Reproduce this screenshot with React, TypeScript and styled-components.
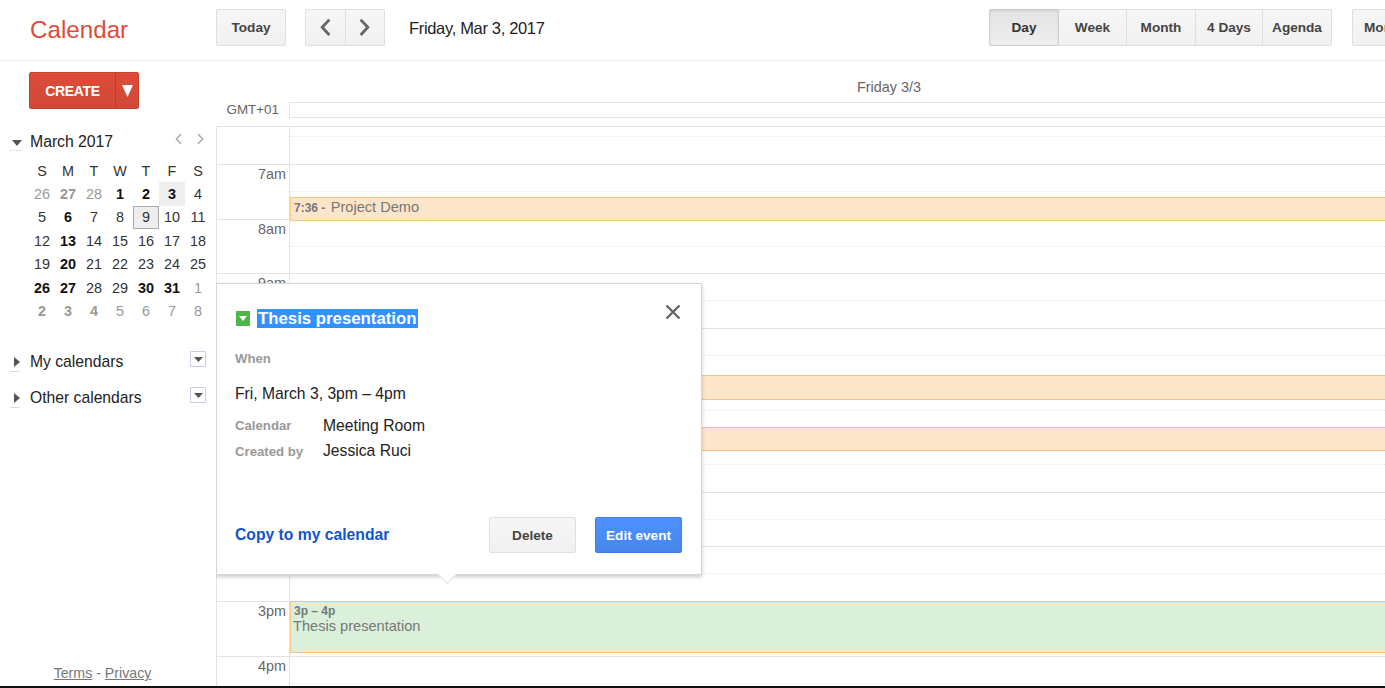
import styled, { createGlobalStyle } from 'styled-components';

const GlobalStyle = createGlobalStyle`
  html, body {
    margin: 0;
    height: 100%;
    background: #fff;
    overflow: hidden;
    font-family: 'Liberation Sans', Arial, sans-serif;
  }
  * { box-sizing: border-box; }
`;

const WEEKDAYS = ['S', 'M', 'T', 'W', 'T', 'F', 'S'];

type Day = { n: number; bold?: boolean; muted?: boolean; today?: boolean; picked?: boolean };

const WEEKS: Day[][] = [
  [{ n: 26, muted: true }, { n: 27, muted: true, bold: true }, { n: 28, muted: true }, { n: 1, bold: true }, { n: 2, bold: true }, { n: 3, bold: true, today: true }, { n: 4 }],
  [{ n: 5 }, { n: 6, bold: true }, { n: 7 }, { n: 8 }, { n: 9, picked: true }, { n: 10 }, { n: 11 }],
  [{ n: 12 }, { n: 13, bold: true }, { n: 14 }, { n: 15 }, { n: 16 }, { n: 17 }, { n: 18 }],
  [{ n: 19 }, { n: 20, bold: true }, { n: 21 }, { n: 22 }, { n: 23 }, { n: 24 }, { n: 25 }],
  [{ n: 26, bold: true }, { n: 27, bold: true }, { n: 28 }, { n: 29 }, { n: 30, bold: true }, { n: 31, bold: true }, { n: 1, muted: true }],
  [{ n: 2, muted: true, bold: true }, { n: 3, muted: true, bold: true }, { n: 4, muted: true, bold: true }, { n: 5, muted: true }, { n: 6, muted: true }, { n: 7, muted: true }, { n: 8, muted: true }],
];

// labels from 10am to 2pm sit behind the event bubble
const HOURS = ['7am', '8am', '9am', '', '', '', '', '', '3pm', '4pm'];

function Chevron({ left, size, color, weight }: { left?: boolean; size: number; color: string; weight: number }) {
  return (
    <svg width={size} height={size * 1.7} viewBox="0 0 10 17">
      <polyline
        points={left ? '8.5,1.5 2,8.5 8.5,15.5' : '1.5,1.5 8,8.5 1.5,15.5'}
        fill="none"
        stroke={color}
        strokeWidth={weight}
      />
    </svg>
  );
}

function ExpandDown() {
  return (
    <svg width="16" height="14" viewBox="0 0 16 14">
      <polygon points="3,2 13,2 8,8" fill="#555" />
      <line x1="1" y1="12.5" x2="14" y2="12.5" stroke="#ddd" strokeDasharray="2 1" />
    </svg>
  );
}

function ExpandRight() {
  return (
    <svg width="16" height="18" viewBox="0 0 16 18">
      <polygon points="5,1 11,6 5,11" fill="#555" />
      <line x1="1" y1="15.5" x2="11" y2="15.5" stroke="#ddd" />
    </svg>
  );
}

function MenuArrow() {
  return (
    <svg width="9" height="5" viewBox="0 0 9 5">
      <polygon points="0,0 9,0 4.5,5" fill="#555" />
    </svg>
  );
}

function App() {
  return (
    <>
      <GlobalStyle />
      <Page>
        <TopBar>
          <Logo>Calendar</Logo>
          <TodayButton>Today</TodayButton>
          <NavGroup>
            <NavButton><Chevron left size={11} color="#666" weight={2.6} /></NavButton>
            <NavButton><Chevron size={11} color="#666" weight={2.6} /></NavButton>
          </NavGroup>
          <DateLabel>Friday, Mar 3, 2017</DateLabel>
          <ViewGroup>
            <ViewButton $width={70} $active>Day</ViewButton>
            <ViewButton $width={68}>Week</ViewButton>
            <ViewButton $width={69}>Month</ViewButton>
            <ViewButton $width={67}>4 Days</ViewButton>
            <ViewButton $width={69}>Agenda</ViewButton>
          </ViewGroup>
          <MoreButton>More</MoreButton>
        </TopBar>
        <Body>
          <Sidebar>
            <CreateButton>
              <CreateLabel>CREATE</CreateLabel>
              <CreateArrow>
                <svg width="11" height="12" viewBox="0 0 11 12"><polygon points="0,0 11,0 5.5,12" fill="#fff" /></svg>
              </CreateArrow>
            </CreateButton>
            <MonthHeader>
              <Expander><ExpandDown /></Expander>
              <MonthTitle>March 2017</MonthTitle>
              <MonthNav>
                <Chevron left size={7} color="#aaa" weight={2.2} />
                <Chevron size={7} color="#aaa" weight={2.2} />
              </MonthNav>
            </MonthHeader>
            <MiniGrid>
              {WEEKDAYS.map((d, i) => (
                <MiniHead key={i}>{d}</MiniHead>
              ))}
              {WEEKS.flat().map((d, i) => (
                <MiniDay key={i} $bold={d.bold} $muted={d.muted} $today={d.today} $picked={d.picked}>
                  {d.n}
                </MiniDay>
              ))}
            </MiniGrid>
            <CalendarRow $first>
              <Expander><ExpandRight /></Expander>
              <CalendarName>My calendars</CalendarName>
              <MenuBox><MenuArrow /></MenuBox>
            </CalendarRow>
            <CalendarRow>
              <Expander><ExpandRight /></Expander>
              <CalendarName>Other calendars</CalendarName>
              <MenuBox><MenuArrow /></MenuBox>
            </CalendarRow>
            <SideFooter>
              <FooterLink>Terms</FooterLink> - <FooterLink>Privacy</FooterLink>
            </SideFooter>
          </Sidebar>
          <Main>
            <DayHeading>Friday 3/3</DayHeading>
            <AllDayRow>
              <Zone>GMT+01</Zone>
              <AllDayBox />
            </AllDayRow>
            <Grid>
              <HourRow $height={38}>
                <HourLabel />
                <HourSlot><HalfHour $height={10} /></HourSlot>
              </HourRow>
              {HOURS.map((h, i) => (
                <HourRow key={i} $height={54.65}>
                  <HourLabel>{h}</HourLabel>
                  <HourSlot><HalfHour $height={27} /></HourSlot>
                </HourRow>
              ))}

              <EventBlock $top={70} $height={24}>
                <EventTime>7:36 - </EventTime>
                <EventTitle>Project Demo</EventTitle>
              </EventBlock>
              <EventBlock $top={248} $height={25} />
              <EventBlock $top={300} $height={24} />
              <EventBlock $top={474} $height={52} $green>
                <EventTimeLine>3p – 4p</EventTimeLine>
                <EventTitleLine>Thesis presentation</EventTitleLine>
              </EventBlock>

              <Bubble>
                <BubbleTitleRow>
                  <ColorChip>
                    <svg width="8" height="5" viewBox="0 0 8 5"><polygon points="0,0 8,0 4,5" fill="#fff" /></svg>
                  </ColorChip>
                  <BubbleTitle>Thesis presentation</BubbleTitle>
                  <CloseIcon width="16" height="16" viewBox="0 0 16 16">
                    <path d="M1.5 1.5 L14.5 14.5 M14.5 1.5 L1.5 14.5" stroke="#666" strokeWidth="2.4" fill="none" />
                  </CloseIcon>
                </BubbleTitleRow>
                <WhenLabel>When</WhenLabel>
                <WhenValue>Fri, March 3, 3pm – 4pm</WhenValue>
                <DetailRow>
                  <DetailLabel>Calendar</DetailLabel>
                  <DetailValue>Meeting Room</DetailValue>
                </DetailRow>
                <DetailRow>
                  <DetailLabel>Created by</DetailLabel>
                  <DetailValue>Jessica Ruci</DetailValue>
                </DetailRow>
                <BubbleFooter>
                  <CopyLink>Copy to my calendar</CopyLink>
                  <DeleteButton>Delete</DeleteButton>
                  <EditButton>Edit event</EditButton>
                </BubbleFooter>
                <BubbleTail />
              </Bubble>
            </Grid>
          </Main>
        </Body>
        <BottomEdge />
      </Page>
    </>
  );
}

const Page = styled.div`
  width: 1385px;
  height: 688px;
  display: flex;
  flex-direction: column;
  overflow: hidden;
`;

const TopBar = styled.header`
  flex: 0 0 61px;
  display: flex;
  align-items: flex-start;
  padding: 9px 0 0 30px;
  border-bottom: 1px solid #efefef;
  overflow: hidden;
`;

const Logo = styled.div`
  width: 186px;
  flex: none;
  color: #dd4b39;
  font-size: 24.2px;
  line-height: 41px;
`;

const buttonFace = `
  background: linear-gradient(#f6f6f6, #f1f1f1);
  border: 1px solid #dfdfdf;
  border-radius: 2px;
  color: #444;
  font-weight: 700;
  font-size: 13.6px;
`;

const TodayButton = styled.div`
  ${buttonFace}
  flex: none;
  width: 70px;
  height: 37px;
  margin-right: 19px;
  display: flex;
  align-items: center;
  justify-content: center;
`;

const NavGroup = styled.div`
  flex: none;
  display: flex;
  width: 80px;
  height: 37px;
  margin-right: 24px;
`;

const NavButton = styled.div`
  ${buttonFace}
  border-radius: 0;
  flex: 1;
  display: flex;
  align-items: center;
  justify-content: center;
  & + & { border-left: 0; }
  &:first-child { border-radius: 2px 0 0 2px; }
  &:last-child { border-radius: 0 2px 2px 0; }
`;

const DateLabel = styled.div`
  flex: none;
  width: 580px;
  color: #222;
  font-size: 16.5px;
  letter-spacing: -0.33px;
  line-height: 38px;
`;

const ViewGroup = styled.div`
  flex: none;
  display: flex;
  height: 37px;
  margin-right: 20px;
`;

const ViewButton = styled.div<{ $width: number; $active?: boolean }>`
  ${buttonFace}
  border-radius: 0;
  width: ${(p) => p.$width}px;
  display: flex;
  align-items: center;
  justify-content: center;
  color: ${(p) => (p.$active ? '#333' : '#444')};
  background: ${(p) => (p.$active ? 'linear-gradient(#e4e4e4, #eeeeee)' : 'linear-gradient(#f6f6f6, #f1f1f1)')};
  border-color: ${(p) => (p.$active ? '#cfcfcf' : '#dfdfdf')};
  box-shadow: ${(p) => (p.$active ? 'inset 0 1px 2px rgba(0,0,0,.1)' : 'none')};
  & + & { border-left: 0; }
  &:first-child { border-radius: 2px 0 0 2px; }
  &:last-child { border-radius: 0 2px 2px 0; }
`;

const MoreButton = styled.div`
  ${buttonFace}
  flex: none;
  width: 70px;
  height: 37px;
  padding-left: 11px;
  display: flex;
  align-items: center;
`;

const Body = styled.div`
  flex: 1;
  min-height: 0;
  display: flex;
`;

const Sidebar = styled.aside`
  flex: 0 0 216px;
  display: flex;
  flex-direction: column;
  padding: 11px 0 0 0;
`;

const CreateButton = styled.div`
  display: flex;
  width: 110px;
  height: 37px;
  margin-left: 29px;
  background: linear-gradient(#dd4b39, #d14836);
  border: 1px solid #c93f2e;
  border-radius: 2px;
  color: #fff;
  font-weight: 700;
`;

const CreateLabel = styled.div`
  width: 85px;
  font-size: 14px;
  line-height: 36px;
  text-align: center;
  letter-spacing: -0.3px;
`;

const CreateArrow = styled.div`
  flex: 1;
  display: flex;
  align-items: center;
  justify-content: center;
  border-left: 1px solid #bb3a2a;
`;

const MonthHeader = styled.div`
  display: flex;
  align-items: center;
  height: 22px;
  margin-top: 22px;
  padding-right: 12px;
`;

const Expander = styled.div`
  width: 30px;
  flex: none;
  display: flex;
  padding: 6px 0 0 9px;
`;

const MonthTitle = styled.div`
  flex: 1;
  color: #222;
  font-size: 15.8px;
  letter-spacing: -0.03px;
`;

const MonthNav = styled.div`
  display: flex;
  gap: 15px;
  margin-top: -6px;
`;

const MiniGrid = styled.div`
  display: grid;
  grid-template-columns: repeat(7, 26px);
  grid-auto-rows: 23.4px;
  margin: 6px 0 0 29px;
`;

const MiniHead = styled.div`
  display: flex;
  align-items: center;
  justify-content: center;
  color: #333;
  font-size: 14.4px;
`;

const MiniDay = styled.div<{ $bold?: boolean; $muted?: boolean; $today?: boolean; $picked?: boolean }>`
  display: flex;
  align-items: center;
  justify-content: center;
  font-size: 14.4px;
  font-weight: ${(p) => (p.$bold ? 700 : 400)};
  color: ${(p) => (p.$muted ? '#999' : p.$bold ? '#111' : '#333')};
  background: ${(p) => (p.$today || p.$picked ? '#eeeeee' : 'transparent')};
  border: ${(p) => (p.$picked ? '1px solid #aaa' : '0')};
`;

const CalendarRow = styled.div<{ $first?: boolean }>`
  display: flex;
  align-items: center;
  height: 22px;
  margin-top: ${(p) => (p.$first ? '28px' : '14px')};
  padding-right: 10px;
`;

const CalendarName = styled.div`
  flex: 1;
  color: #222;
  font-size: 15.7px;
`;

const MenuBox = styled.div`
  width: 16px;
  height: 16px;
  margin-top: -5px;
  display: flex;
  align-items: center;
  justify-content: center;
  background: #fff;
  border: 1px solid #c6cfe0;
  border-radius: 1px;
`;

const SideFooter = styled.div`
  margin-top: auto;
  padding: 0 11px 5px 0;
  text-align: center;
  color: #777;
  font-size: 14.2px;
`;

const FooterLink = styled.span`
  text-decoration: underline;
`;

const Main = styled.main`
  flex: 1;
  min-width: 0;
  display: flex;
  flex-direction: column;
  overflow: hidden;
`;

const DayHeading = styled.div`
  flex: none;
  width: 1200px;
  margin-left: 73px;
  padding-top: 18px;
  text-align: center;
  color: #666;
  font-size: 14.4px;
  line-height: 17px;
`;

const AllDayRow = styled.div`
  flex: none;
  display: flex;
  height: 24px;
  margin-top: 6px;
`;

const Zone = styled.div`
  width: 63px;
  flex: none;
  margin-right: 10px;
  text-align: right;
  color: #666;
  font-size: 13.4px;
  line-height: 16px;
`;

const AllDayBox = styled.div`
  flex: 1;
  height: 16px;
  border: 1px solid #e3e3e3;
  border-right: 0;
`;

const Grid = styled.div`
  position: relative;
  flex: 1;
  min-height: 0;
  border-top: 1px solid #e3e3e3;
  border-left: 1px solid #e3e3e3;
`;

const HourRow = styled.div<{ $height: number }>`
  display: flex;
  height: ${(p) => p.$height}px;
  border-bottom: 1px solid #e3e3e3;
`;

const HourLabel = styled.div`
  width: 73px;
  flex: none;
  padding: 0 3px 0 0;
  text-align: right;
  color: #666;
  font-size: 14.4px;
  line-height: 18px;
  border-right: 1px solid #e3e3e3;
`;

const HourSlot = styled.div`
  flex: 1;
`;

const HalfHour = styled.div<{ $height: number }>`
  height: ${(p) => p.$height}px;
  border-bottom: 1px dotted #e8e8e8;
`;

const EventBlock = styled.div<{ $top: number; $height: number; $green?: boolean }>`
  position: absolute;
  left: 73px;
  right: -10px;
  top: ${(p) => p.$top}px;
  height: ${(p) => p.$height}px;
  padding: 0 0 0 3px;
  background: ${(p) => (p.$green ? '#daf0db' : '#fde5c9')};
  border: 1px solid #fbc57d;
  border-right: 0;
  color: #777;
  line-height: 18px;
  white-space: nowrap;
`;

const EventTime = styled.span`
  font-weight: 700;
  font-size: 12px;
  margin-right: 2px;
`;

const EventTitle = styled.span`
  font-size: 14.6px;
`;

const EventTimeLine = styled.div`
  font-weight: 700;
  font-size: 12px;
  line-height: 16px;
  padding-top: 1px;
`;

const EventTitleLine = styled.div`
  margin-left: -1px;
  font-size: 14.6px;
  line-height: 15px;
`;

const Bubble = styled.div`
  position: absolute;
  left: -1px;
  top: 156px;
  width: 486px;
  height: 292px;
  display: flex;
  flex-direction: column;
  padding: 24px 19px 21px 18px;
  background: #fff;
  border: 1px solid #d5d5d5;
  box-shadow: 0 2px 4px rgba(0, 0, 0, 0.2);
`;

const BubbleTitleRow = styled.div`
  display: flex;
  align-items: center;
  height: 21px;
`;

const ColorChip = styled.div`
  width: 14px;
  height: 15px;
  margin: 0 7px 0 1px;
  display: flex;
  align-items: center;
  justify-content: center;
  background: #4cb648;
`;

const BubbleTitle = styled.div`
  padding: 0 1px;
  background: #3390ff;
  color: #fff;
  font-weight: 700;
  font-size: 16.8px;
  line-height: 19px;
`;

const CloseIcon = styled.svg`
  margin: -13px 1px 0 auto;
`;

const WhenLabel = styled.div`
  margin-top: 22px;
  color: #999;
  font-weight: 700;
  font-size: 13.2px;
  line-height: 16px;
`;

const WhenValue = styled.div`
  margin: 17px 0 9px;
  color: #222;
  font-size: 15.7px;
  line-height: 20px;
`;

const DetailRow = styled.div`
  display: flex;
  align-items: center;
  height: 25.5px;
`;

const DetailLabel = styled.div`
  width: 88px;
  flex: none;
  color: #999;
  font-weight: 700;
  font-size: 13.2px;
`;

const DetailValue = styled.div`
  color: #222;
  font-size: 15.7px;
`;

const BubbleFooter = styled.div`
  margin-top: auto;
  display: flex;
  align-items: center;
`;

const CopyLink = styled.div`
  margin: -1px auto 0 0;
  color: #1155cc;
  font-weight: 700;
  font-size: 15.7px;
`;

const DeleteButton = styled.div`
  ${buttonFace}
  width: 87px;
  height: 36px;
  margin-right: 19px;
  display: flex;
  align-items: center;
  justify-content: center;
`;

const EditButton = styled.div`
  width: 87px;
  height: 36px;
  display: flex;
  align-items: center;
  justify-content: center;
  background: linear-gradient(#4d90fe, #4787ed);
  border: 1px solid #3f7fe8;
  border-radius: 2px;
  color: #fff;
  font-weight: 700;
  font-size: 13.6px;
`;

const BubbleTail = styled.div`
  position: absolute;
  left: 223px;
  bottom: -7px;
  width: 14px;
  height: 14px;
  background: #fff;
  border-right: 1px solid #e4e4e4;
  border-bottom: 1px solid #e4e4e4;
  transform: rotate(45deg);
`;

const BottomEdge = styled.div`
  flex: 0 0 2px;
  background: #111;
`;

export default App;
